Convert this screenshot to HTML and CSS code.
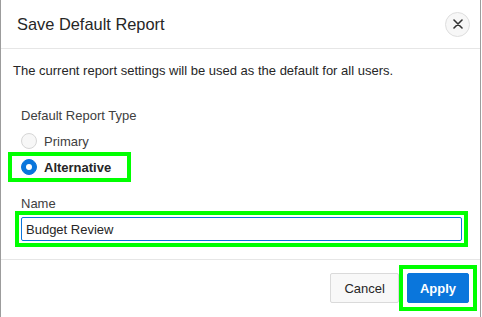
FILE: index.html
```html
<!DOCTYPE html>
<html lang="en">
<head>
    <meta charset="UTF-8">
    <meta name="viewport" content="width=device-width, initial-scale=1.0">
    <title>Save Default Report</title>
    <link rel="stylesheet" href="styles.css">
</head>
<body>
    <div class="dialog">
        <header class="dialog-head">
            <h2 class="dialog-title">Save Default Report</h2>
            <button class="close-btn" type="button" aria-label="Close">
                <svg width="10" height="10" viewBox="0 0 10 10">
                    <path d="M1 1L9 9M9 1L1 9" stroke="#333" stroke-width="1.6" stroke-linecap="round"/>
                </svg>
            </button>
        </header>

        <div class="dialog-body">
            <p class="intro">The current report settings will be used as the default for all users.</p>

            <div class="field">
                <div class="field-label">Default Report Type</div>
                <div class="radio-group">
                    <label class="radio">
                        <span class="radio-dot"></span>
                        <span>Primary</span>
                    </label>
                    <label class="radio checked highlight">
                        <span class="radio-dot"></span>
                        <span>Alternative</span>
                    </label>
                </div>
            </div>

            <div class="field name-field">
                <label class="field-label" for="name">Name</label>
                <div class="input-wrap highlight">
                    <input type="text" id="name" class="text-input" value="Budget Review">
                </div>
            </div>
        </div>

        <footer class="dialog-foot">
            <button class="btn" type="button">Cancel</button>
            <div class="btn-wrap highlight">
                <button class="btn btn-primary" type="button">Apply</button>
            </div>
        </footer>
    </div>
</body>
</html>
```

FILE: styles.css
```css
* {
    margin: 0;
    padding: 0;
    box-sizing: border-box;
}

body {
    font-family: "Liberation Sans", Arial, sans-serif;
    color: #262626;
    background: #fff;
}

.dialog {
    width: 481px;
    height: 317px;
    border-left: 1px solid #9c9c9c;
    border-right: 1px solid #9c9c9c;
    display: flex;
    flex-direction: column;
}

.dialog-head {
    height: 49px;
    border-bottom: 1px solid #e6e6e6;
    display: flex;
    align-items: center;
    justify-content: space-between;
    padding: 0 10px 0 16px;
}

.dialog-title {
    font-size: 16.4px;
    font-weight: 400;
    color: #262626;
}

.close-btn {
    width: 25px;
    height: 25px;
    border-radius: 50%;
    border: 1px solid #dedede;
    background: #f7f7f7;
    display: flex;
    align-items: center;
    justify-content: center;
}

.dialog-body {
    padding: 14px 19px 0 12px;
    height: 211px;
    border-bottom: 1px solid #e6e6e6;
}

.intro {
    font-size: 13px;
    line-height: 16px;
}

.field {
    padding-left: 8px;
}

.field-label {
    display: block;
    font-size: 13px;
    line-height: 16px;
    color: #404040;
    margin-top: 29px;
}

.radio-group {
    margin-top: 5px;
}

.radio {
    display: flex;
    align-items: center;
    gap: 7px;
    height: 24px;
    font-size: 13px;
    color: #404040;
}

.radio-dot {
    width: 16px;
    height: 16px;
    border-radius: 50%;
    border: 1px solid #d6d6d6;
    background: #f7f7f7;
    display: flex;
    align-items: center;
    justify-content: center;
}

.radio.checked {
    font-weight: 700;
    color: #262626;
    width: fit-content;
    height: 22px;
    margin-top: 3px;
    margin-left: -9px;
    padding: 0 16px 0 9px;
}

.radio.checked .radio-dot {
    border-color: #0a76dc;
    background: #0a76dc;
}

.radio.checked .radio-dot::after {
    content: "";
    width: 6px;
    height: 6px;
    border-radius: 50%;
    background: #fff;
}

/* green marker boxes */
.highlight {
    box-shadow: 0 0 0 4px #00ff00;
}

.name-field .field-label {
    margin-top: 18px;
}

.input-wrap {
    width: 445px;
    margin: 3px 0 0 -2px;
    padding: 2px;
}

.text-input {
    display: block;
    width: 441px;
    height: 24px;
    border: 1px solid #0a76dc;
    border-radius: 2px;
    padding: 0 4px;
    font-family: inherit;
    font-size: 13px;
    color: #262626;
    outline: none;
}

.dialog-foot {
    flex: 1;
    display: flex;
    justify-content: flex-end;
    align-items: flex-start;
    gap: 8px;
    padding: 13px 11px 0 0;
}

.btn {
    height: 30px;
    padding: 0 13px;
    border: 1px solid #dadada;
    border-radius: 2px;
    background: #f8f8f8;
    font-family: inherit;
    font-size: 13px;
    color: #262626;
}

.btn-wrap {
    display: flex;
    padding: 4px;
    margin: -4px -4px 0 -4px;
}

.btn-primary {
    background: #0a76dc;
    border-color: #0a76dc;
    color: #fff;
    font-weight: 700;
    padding: 0 12px;
}
```
